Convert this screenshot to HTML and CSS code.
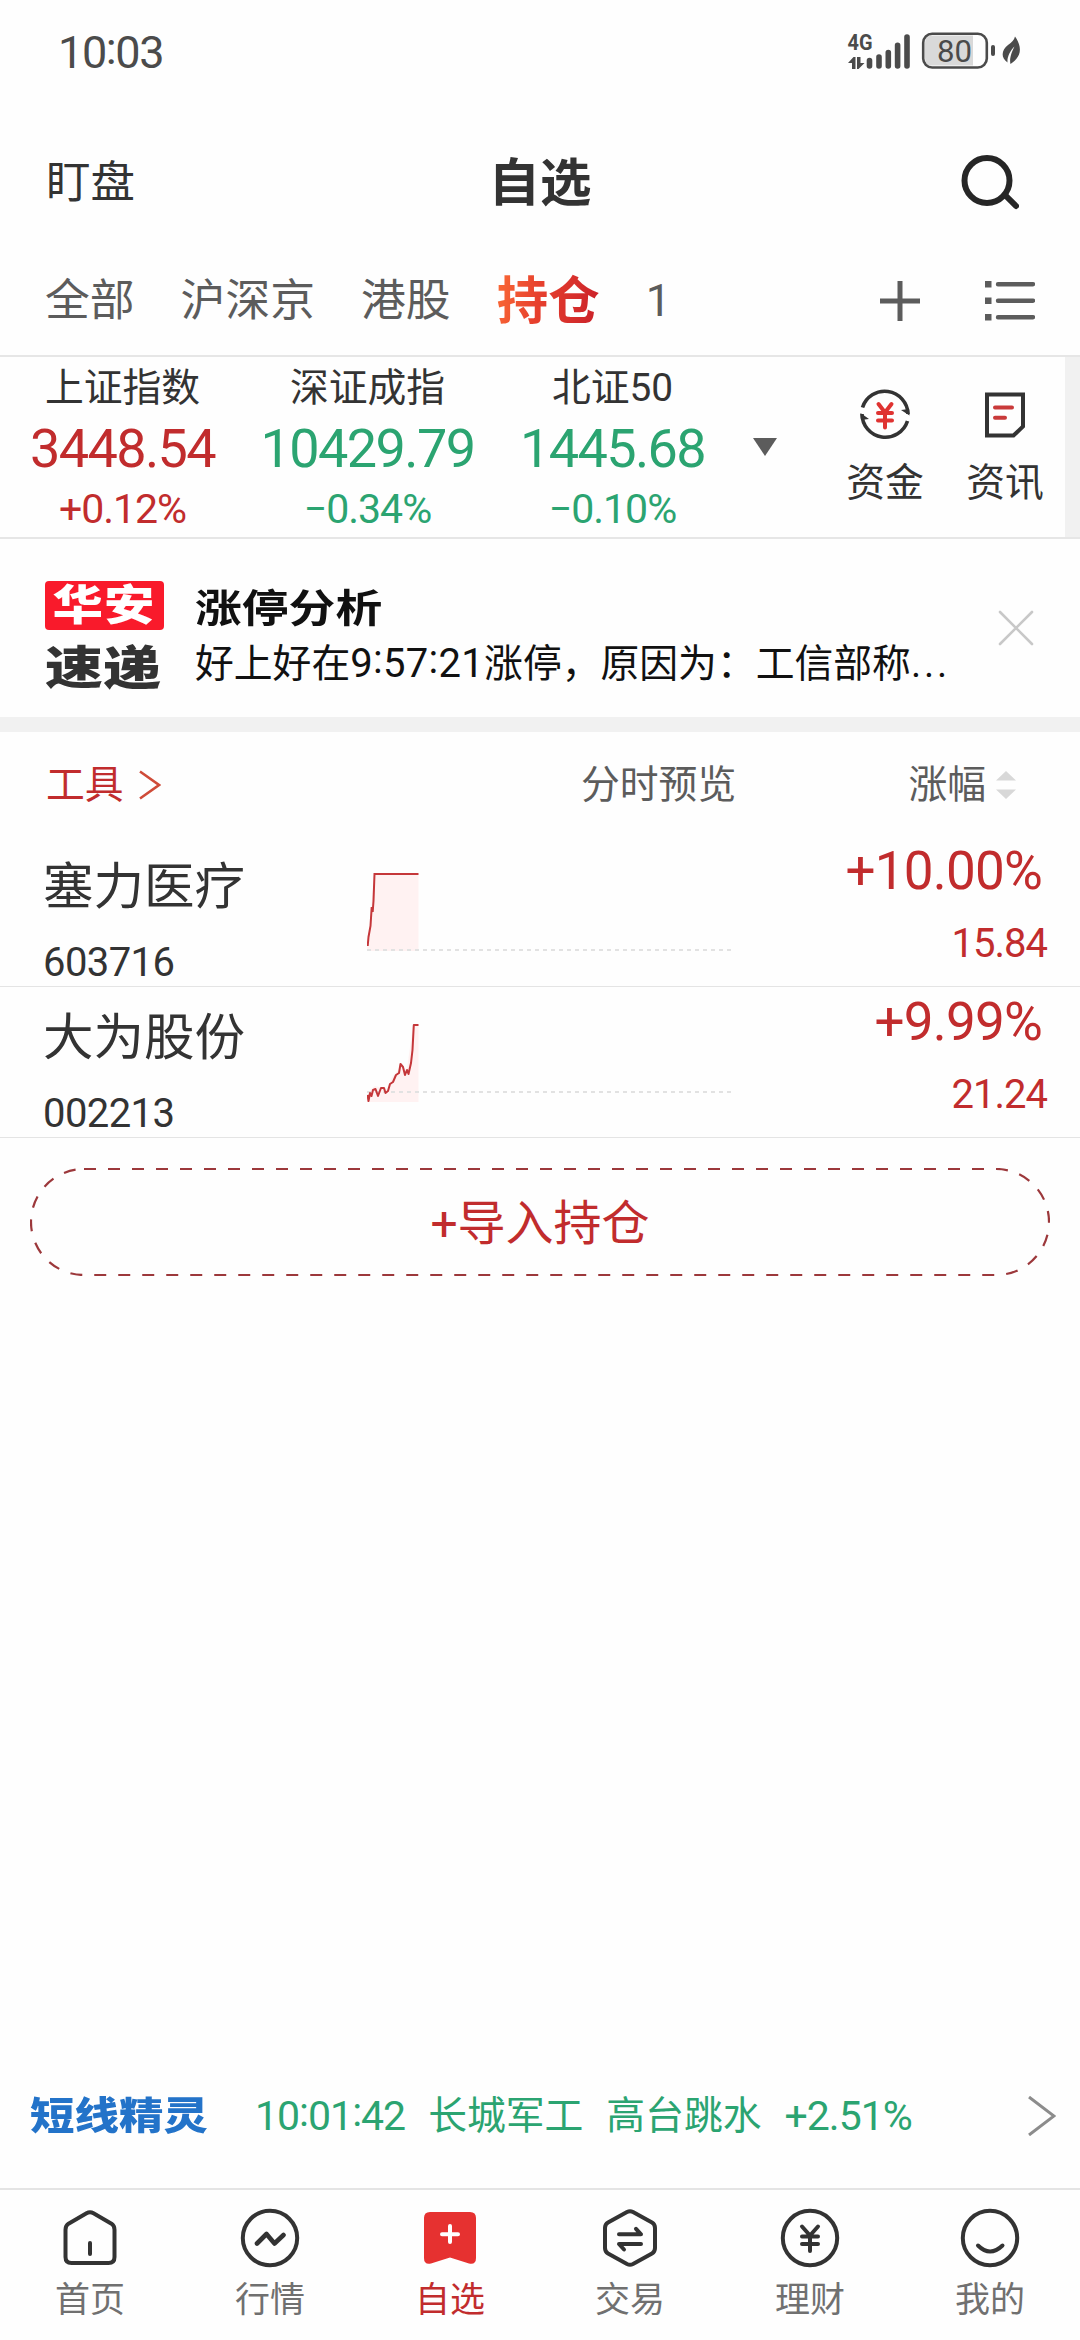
FILE: index.html
```html
<!DOCTYPE html>
<html lang="zh-CN">
<head>
    <meta charset="UTF-8">
    <meta name="viewport" content="width=device-width, initial-scale=1.0">
    <title>自选</title>
    <link rel="stylesheet" href="styles.css">
</head>
<body>
    <div class="status-bar">
        <span class="time">10<i class="colon">:</i>03</span>
        <svg class="status-icons" width="176" height="40" viewBox="846 31 176 40">
            <text class="net" x="847.5" y="50" textLength="25" lengthAdjust="spacingAndGlyphs">4G</text>
            <path d="M848 63l5.500-6h2v12h-3.500v-6zM857 57h3.500v6h4l-6 6h-1.500z" fill="#4b4b4b"/>
            <path d="M869.5 60.500v5.500M879 57v9M888.3 52.500v13.500M897.600 45.200v20.800M907 37v29" stroke="#4b4b4b" stroke-width="5.600" stroke-linecap="round"/>
            <path d="M930 35.500h43v30h-43q-5-1-5-8v-14q0-7 5-8z" fill="#d9d9d9"/>
            <rect x="923.200" y="33.700" width="63.600" height="33.800" rx="9" fill="none" stroke="#4b4b4b" stroke-width="2.600"/>
            <rect x="991" y="45" width="4" height="11" rx="2" fill="#4b4b4b"/>
            <text class="battery-num" x="937" y="62" textLength="35" lengthAdjust="spacingAndGlyphs">80</text>
            <path d="M1015 36.500C1023 48 1021 57 1010.500 64C1009 59 1012 51 1014.500 46.500C1010 51 1007 57 1007.500 62.500C1000 57 1002 49.500 1008 45Q1014 41 1015 36.500z" fill="#4b4b4b"/>
        </svg>
    </div>

    <header class="header">
        <span class="watch">盯盘</span>
        <h1>自选</h1>
        <svg class="search" width="60" height="60" viewBox="0 0 60 60" fill="none" stroke="#262626" stroke-width="6">
            <circle cx="28" cy="28.500" r="22.500"/>
            <path d="M46 43l11 11" stroke-linecap="round"/>
        </svg>
    </header>

    <nav class="tabs">
        <span>全部</span>
        <span>沪深京</span>
        <span>港股</span>
        <span class="active">持仓</span>
        <span>1</span>
        <div class="tab-tools">
            <svg width="40" height="40" viewBox="0 0 40 40" stroke="#5c5c5c" stroke-width="5">
                <path d="M0 20h40M20 0v40"/>
            </svg>
            <svg width="50" height="40" viewBox="0 0 50 40" fill="#5c5c5c">
                <path d="M0 0h6.500v6.500H0zM0 16.500h6.500V23H0zM0 33h6.500v6.500H0z"/>
                <path d="M13 3.200h35M13 19.700h35M13 36.200h35" stroke="#5c5c5c" stroke-width="4.400" stroke-linecap="round"/>
            </svg>
        </div>
    </nav>

    <section class="indices">
        <div class="index up">
            <span class="index-name">上证指数</span>
            <span class="index-value">3448.54</span>
            <span class="index-change">+0.12%</span>
        </div>
        <div class="index down">
            <span class="index-name">深证成指</span>
            <span class="index-value">10429.79</span>
            <span class="index-change">−0.34%</span>
        </div>
        <div class="index down">
            <span class="index-name">北证50</span>
            <span class="index-value">1445.68</span>
            <span class="index-change">−0.10%</span>
        </div>
        <svg class="expand" width="24" height="18" viewBox="0 0 24 18"><path d="M0 0h24L12 18z" fill="#5c5c5c"/></svg>
        <div class="shortcut fund">
            <svg width="50" height="52" viewBox="0 0 50 52" fill="none" stroke="#333" stroke-width="3.600">
                <path d="M2.500 19.500A23.300 23.300 0 0 1 48 26M47.500 33A23.300 23.300 0 0 1 2 26"/>
                <path d="M49.500 27.500l-8.500-5.500 8-1zM.5 25l8.500 6-8 1z" fill="#333" stroke="none"/>
                <path d="M18.500 16l6.500 8.500 6.500-8.500M18 25h14M18 32.500h14M25 24v15.500" stroke="#df3331" stroke-width="4" stroke-linecap="round"/>
            </svg>
            <span>资金</span>
        </div>
        <div class="shortcut">
            <svg width="50" height="52" viewBox="0 0 50 52" fill="none" stroke="#333" stroke-width="4">
                <path d="M7 6.500h36v32l-9.500 9H7z"/>
                <path d="M15 19.500h17M15 29.800h10" stroke="#c93a3a" stroke-linecap="round"/>
            </svg>
            <span>资讯</span>
        </div>
        <i class="edge"></i>
    </section>

    <section class="promo">
        <div class="promo-logo">
            <span class="logo-red"><b>华安</b></span>
            <span class="logo-dark">速递</span>
        </div>
        <div class="promo-text">
            <h2>涨停分析</h2>
            <p>好上好在<span class="clock">9<i class="colon">:</i>57<i class="colon">:</i>21</span>涨停，原因为：工信部称<span class="dots">...</span></p>
        </div>
        <svg class="close" width="36" height="36" viewBox="0 0 36 36" stroke="#c8c8c8" stroke-width="2.600" stroke-linecap="round">
            <path d="M2 2l32 32M34 2L2 34"/>
        </svg>
    </section>

    <section class="stocks">
        <div class="stock-head">
            <span class="tools">工具
                <svg width="22" height="30" viewBox="0 0 22 30" fill="none" stroke="#cf4b38" stroke-width="2.600"><path d="M1 1.500L20 15 1 28.500"/></svg>
            </span>
            <span class="head-preview">分时预览</span>
            <span class="head-change">涨幅
                <svg width="20" height="28" viewBox="0 0 20 28" fill="#d8d8d8"><path d="M0 9.500L10 0l10 9.500zM0 18.500h20L10 28z"/></svg>
            </span>
        </div>
        <div class="stock">
            <div class="stock-info">
                <span class="stock-name">塞力医疗</span>
                <span class="stock-code">603716</span>
            </div>
            <svg class="chart" width="364" height="150" viewBox="0 0 364 150" fill="none">
                <path d="M0 109L3 91 5 62 8 38H51.500V115H0z" fill="#fff2f2"/>
                <path d="M0 114h364" stroke="#e2e2e2" stroke-width="2" stroke-dasharray="4 4"/>
                <path d="M.7 110L1.500 101 3.500 90 4.700 71 5.700 76 6.500 65 7.500 38H51.500" stroke="#c5373a" stroke-width="2"/>
            </svg>
            <div class="stock-quote">
                <span class="stock-change">+10.00%</span>
                <span class="stock-price">15.84</span>
            </div>
        </div>
        <div class="stock">
            <div class="stock-info">
                <span class="stock-name">大为股份</span>
                <span class="stock-code">002213</span>
            </div>
            <svg class="chart" width="364" height="150" viewBox="0 0 364 150" fill="none">
                <path d="M0 110L4 102 8 99 20 102 25 90 34 80 40 82 46 38H51.500V115H0z" fill="#fff2f2"/>
                <path d="M0 105h364" stroke="#e2e2e2" stroke-width="2" stroke-dasharray="4 4"/>
                <path d="M.5 108L1.500 114 3 106 4.500 109 6 103 8.500 102 11 109 14 101 17 101 18.500 106 21 104 23 97 26 95 29 88 32 86 33.500 77 36 80 38 88 40 83 41.500 87 44 76 45.500 63 46.800 38H51.500" stroke="#c5373a" stroke-width="2" stroke-linejoin="round"/>
            </svg>
            <div class="stock-quote">
                <span class="stock-change">+9.99%</span>
                <span class="stock-price">21.24</span>
            </div>
        </div>
    </section>

    <div class="import">
        <svg class="import-border" width="1020" height="108" viewBox="0 0 1020 108">
            <rect x="1" y="1" width="1018" height="106" rx="53" fill="none" stroke="#9c383b" stroke-width="2.200" stroke-dasharray="12 12"/>
        </svg>
        <span>+导入持仓</span>
    </div>

    <div class="ticker">
        <span class="ticker-logo">短线精灵</span>
        <span class="ticker-time">10<i class="colon">:</i>01<i class="colon">:</i>42</span>
        <span>长城军工</span>
        <span>高台跳水</span>
        <span class="ticker-pct">+2.51%</span>
        <svg class="ticker-arrow" width="28" height="40" viewBox="0 0 28 40" fill="none" stroke="#8c8c8c" stroke-width="3"><path d="M1 1l25 19L1 39"/></svg>
    </div>

    <nav class="bottom-nav">
        <a>
            <svg width="60" height="60" viewBox="0 0 60 60">
                <path d="M26.500 5.200q3.500-2 7 0l18 10.500q3 2 3 6V49q0 6-6 6h-37q-6 0-6-6V21.700q0-4 3-6z"/>
                <path d="M30 35v11"/>
            </svg>
            首页
        </a>
        <a>
            <svg width="60" height="60" viewBox="0 0 60 60">
                <circle cx="30" cy="30" r="27.200"/>
                <path d="M17 35.500l9.500-9.500 8 9.500 9-8.500" stroke-width="4.600"/>
            </svg>
            行情
        </a>
        <a class="active">
            <svg width="60" height="60" viewBox="0 0 60 60">
                <path d="M10 4h40q6 0 6 6v40q0 7-7 5.500L30 49.500 11 55.500Q4 57 4 50V10q0-6 6-6z" fill="#e63130" stroke="none"/>
                <path d="M22 26.300h16M30 18v16" stroke="#fff"/>
            </svg>
            自选
        </a>
        <a>
            <svg width="60" height="60" viewBox="0 0 60 60">
                <path d="M27 4q3-1.500 6 0l19 10.500q3 1.700 3 5.500v20q0 3.800-3 5.500L33 56q-3 1.500-6 0L8 45.500Q5 43.800 5 40V20q0-3.800 3-5.500z"/>
                <path d="M19 26.300h22l-5-5.500M41 36H19l5 5.500"/>
            </svg>
            交易
        </a>
        <a>
            <svg width="60" height="60" viewBox="0 0 60 60">
                <circle cx="30" cy="30" r="27.200"/>
                <path d="M22 18.500l8 9 8-9M22 28.500h16M22 36h16M30 28v15"/>
            </svg>
            理财
        </a>
        <a>
            <svg width="60" height="60" viewBox="0 0 60 60">
                <circle cx="30" cy="30" r="27.200"/>
                <path d="M18 37.500q12 12 24.500 0"/>
            </svg>
            我的
        </a>
    </nav>
</body>
</html>
```
FILE: styles.css
```css
* {
    margin: 0;
    padding: 0;
    box-sizing: border-box;
}

body {
    width: 1080px;
    height: 2340px;
    display: flex;
    flex-direction: column;
    overflow: hidden;
    background: #fefefe;
    color: #333;
    font-family: Roboto, "Noto Sans CJK SC", sans-serif;
    font-size: 38.8px;
    line-height: 1;
}

svg {
    display: block;
    flex-shrink: 0;
}

span {
    white-space: nowrap;
}

.colon {
    font-style: normal;
    line-height: 0;
    vertical-align: .09em;
}

/* status bar */
.status-bar {
    height: 120px;
    padding: 31px 58px 0;
    display: flex;
    justify-content: space-between;
    color: #4b4b4b;
}

.time {
    font-size: 45px;
    line-height: 43px;
    letter-spacing: -1.4px;
}

.net {
    font-size: 22px;
    font-weight: 700;
    fill: #4b4b4b;
}

.battery-num {
    font-size: 32px;
    fill: #4b4b4b;
}

/* header */
.header {
    height: 124px;
    padding: 0 61px 0 46px;
    display: grid;
    grid-template-columns: 1fr auto 1fr;
    align-items: center;
}

.watch {
    padding-top: 3px;
    font-size: 44.5px;
}

h1 {
    font-size: 51.5px;
    font-weight: 700;
    padding: 3px 0 0 15px;
}

.search {
    justify-self: end;
}

/* group tabs */
.tabs {
    height: 111px;
    padding: 2px 45px 0 45px;
    display: flex;
    align-items: center;
    gap: 46px;
    font-size: 44.8px;
    color: #5c5c5c;
}

.tabs span {
    padding-top: 2px;
}

.tabs .active {
    font-size: 51.5px;
    font-weight: 700;
    color: transparent;
    background: linear-gradient(100deg, #fa6a36, #e7402d 40%, #c9202a);
    background-clip: text;
    -webkit-background-clip: text;
}

.tab-tools {
    margin-left: auto;
    display: flex;
    gap: 65px;
}

/* index strip */
.indices {
    height: 184px;
    display: flex;
    align-items: center;
    border-top: 2px solid #e6e6e6;
    border-bottom: 2px solid #e6e6e6;
}

.index {
    width: 245px;
    height: 180px;
    padding-top: 9px;
    display: flex;
    flex-direction: column;
    align-items: center;
}

.index-name {
    line-height: 44px;
}

.index-value {
    font-size: 54px;
    line-height: 78px;
    letter-spacing: -1.6px;
}

.index-change {
    font-size: 41px;
    line-height: 42px;
    letter-spacing: -1px;
}

.up .index-value,
.up .index-change {
    color: #c12c2d;
}

.down .index-value,
.down .index-change {
    color: #2ba471;
}

.expand {
    margin-left: 18px;
}

.shortcut {
    width: 120px;
    height: 180px;
    padding-top: 31px;
    display: flex;
    flex-direction: column;
    align-items: center;
    gap: 18px;
}

.shortcut span {
    line-height: 50px;
}

.fund {
    margin-left: 48px;
}

.edge {
    width: 15px;
    height: 180px;
    margin-left: auto;
    background: #f1f1f1;
}

/* promo */
.promo {
    height: 193px;
    padding: 42px 46px 0 45px;
    display: flex;
    border-bottom: 15px solid #f1f1f1;
    color: #111;
}

.promo-logo {
    width: 119px;
    display: flex;
    flex-direction: column;
    gap: 13px;
}

.logo-red {
    height: 49px;
    background: #f91a2b;
    border-radius: 4px;
    color: #fff;
    text-align: center;
}

.logo-red b,
.logo-dark,
.ticker-logo {
    font-weight: 900;
}

.logo-red b {
    display: inline-block;
    font-size: 42px;
    line-height: 50px;
    letter-spacing: 1px;
    transform: scaleX(1.2);
}

.logo-dark {
    width: 96px;
    font-size: 46px;
    line-height: 50px;
    color: #333;
    transform: scaleX(1.26);
    transform-origin: left;
}

.promo-text {
    margin-left: 31px;
}

h2 {
    font-size: 39px;
    line-height: 56px;
    font-weight: 700;
    transform: scaleX(1.2);
    transform-origin: left;
}

.promo-text p {
    margin-top: 2px;
    line-height: 50px;
    white-space: nowrap;
}

.clock {
    font-size: 40px;
    letter-spacing: .3px;
}

.dots {
    letter-spacing: 2.8px;
}

.close {
    margin: 29px 0 0 auto;
}

/* stock list */
.stock-head {
    height: 104px;
    padding: 2px 64px 0 46px;
    display: grid;
    grid-template-columns: 535px 1fr auto;
    align-items: center;
    color: #5c5c5c;
}

.tools,
.head-change {
    display: flex;
    align-items: center;
}

.tools {
    gap: 15px;
    color: #c12c2d;
}

.head-change {
    gap: 10px;
}

.stock {
    height: 151px;
    padding: 0 33px 0 43px;
    display: flex;
    border-bottom: 1px solid #e4e4e4;
}

.stock-info {
    width: 324px;
    display: flex;
    flex-direction: column;
}

.stock-name {
    font-size: 50.5px;
    line-height: 101px;
}

.stock-code {
    font-size: 40px;
    line-height: 52px;
    letter-spacing: -.6px;
}

.stock-quote {
    margin-left: auto;
    display: flex;
    flex-direction: column;
    align-items: flex-end;
    color: #c12c2d;
}

.stock-change {
    margin-right: 5px;
    font-size: 53px;
    line-height: 70px;
    letter-spacing: -.8px;
}

.stock-price {
    font-size: 40px;
    line-height: 76px;
    letter-spacing: -1px;
}

/* import button */
.import {
    height: 108px;
    margin: 30px 30px 0;
    padding-top: 3px;
    position: relative;
    display: flex;
    align-items: center;
    justify-content: center;
    font-size: 48px;
    color: #c12c2d;
}

.import-border {
    position: absolute;
    top: 0;
    left: 0;
}

/* short-term ticker */
.ticker {
    height: 144px;
    margin-top: auto;
    padding: 0 24px 0 30px;
    display: flex;
    align-items: center;
    color: #2ba471;
}

.ticker span + span {
    margin-left: 23px;
}

.ticker-logo {
    width: 202px;
    font-size: 38px;
    color: #2373c9;
    transform: scaleX(1.17);
    transform-origin: left;
}

.ticker-time,
.ticker-pct {
    font-size: 41px;
    letter-spacing: -1px;
}

.ticker-arrow {
    margin-left: auto;
}

/* bottom navigation */
.bottom-nav {
    height: 152px;
    display: grid;
    grid-template-columns: repeat(6, 1fr);
    border-top: 2px solid #e4e4e4;
    font-size: 35px;
    color: #707070;
}

.bottom-nav a {
    padding-top: 18px;
    display: flex;
    flex-direction: column;
    align-items: center;
    line-height: 65px;
}

.bottom-nav svg {
    fill: none;
    stroke: #333;
    stroke-width: 4;
    stroke-linecap: round;
    stroke-linejoin: round;
}

.bottom-nav .active {
    color: #c12c2d;
}
```
